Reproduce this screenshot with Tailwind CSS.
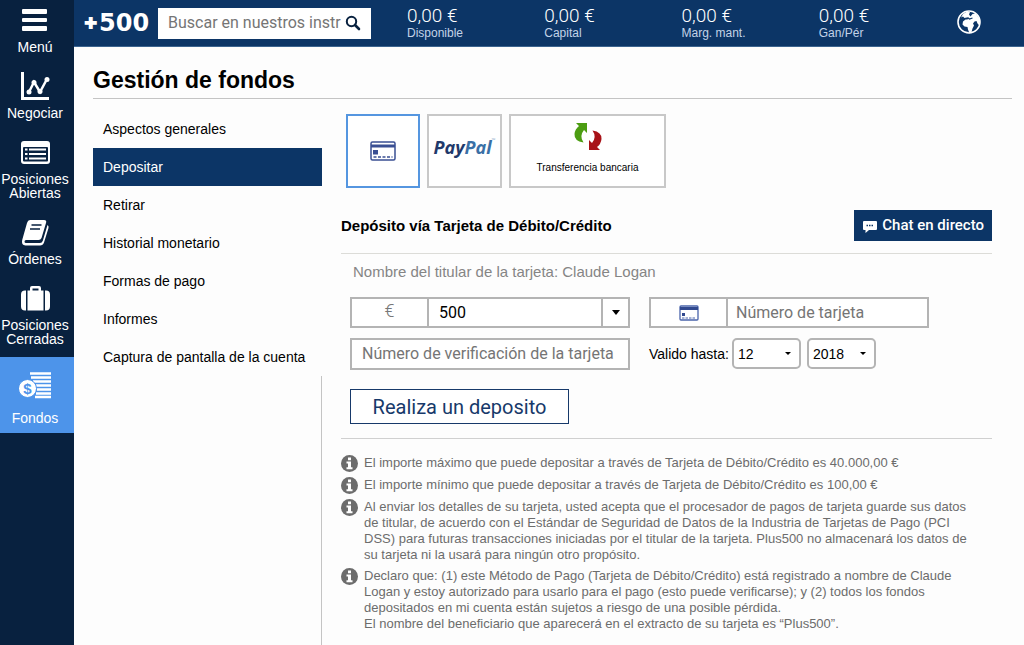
<!DOCTYPE html>
<html lang="es">
<head>
    <meta charset="UTF-8">
    <meta name="viewport" content="width=device-width, initial-scale=1.0">
    <title>Gestión de fondos</title>
    <script src="https://cdn.jsdelivr.net/npm/@tailwindcss/browser@4"></script>
</head>
<body class="flex min-h-screen bg-[#fdfdfd] font-['Liberation_Sans',Arial,sans-serif] text-black">

    <!-- Barra lateral -->
    <nav class="w-[74px] shrink-0 bg-[#08213f] pt-1 text-center text-sm leading-[14px] text-white">
        <div class="flex flex-col gap-4 pr-1">
            <a href="#" class="flex flex-col items-center gap-1">
                <svg class="h-8 w-8" viewBox="0 0 32 32" fill="#fff">
                    <rect x="3" y="5" width="25" height="5" rx="1"/>
                    <rect x="3" y="14" width="25" height="4" rx="1"/>
                    <rect x="3" y="22" width="25" height="5" rx="1"/>
                </svg>
                Menú
            </a>
            <a href="#" class="flex flex-col items-center gap-1">
                <svg class="h-8 w-8" viewBox="0 0 32 32" fill="none" stroke="#fff">
                    <path d="M3.500 2v27M2 28.500h28" stroke-width="3"/>
                    <path d="M10 22l5-10 6 10 7-13" stroke-width="2.500"/>
                    <g fill="#fff" stroke="none">
                        <circle cx="10" cy="22" r="2.500"/><circle cx="15" cy="12.500" r="2.500"/>
                        <circle cx="21" cy="21.500" r="2.500"/><circle cx="28" cy="9.500" r="2.500"/>
                    </g>
                </svg>
                Negociar
            </a>
            <a href="#" class="flex flex-col items-center gap-1">
                <svg class="h-8 w-8" viewBox="0 0 32 32">
                    <rect x="2" y="5" width="29" height="23" rx="3" fill="#fff"/>
                    <rect x="4" y="11" width="25" height="14.500" rx="1" fill="#08213f"/>
                    <path d="M6 13.500h2.500M6 18h2.500M6 22.500h2.500M10 13.500h17M10 18h17M10 22.500h17" stroke="#fff" stroke-width="2.200"/>
                </svg>
                Posiciones Abiertas
            </a>
            <a href="#" class="flex flex-col items-center gap-1">
                <svg class="h-8 w-8" viewBox="0 0 32 32">
                    <path d="M11 4h14q3 0 2 3l-4.500 15q-.8 2-3 2H7q-1.500 0-1.500 1.500T7 27h14q2 0 2.800-2.300L28.500 9q1.500 1 1 3L25 26.500q-1 3-4 3H6.500Q2 29 3.200 24L8 7q.8-3 3-3z" fill="#fff"/>
                    <path d="M12.500 9h10M11 13h10" stroke="#08213f" stroke-width="1.700"/>
                </svg>
                Órdenes
            </a>
            <a href="#" class="flex flex-col items-center gap-1">
                <svg class="h-8 w-8" viewBox="0 0 32 32" fill="#fff">
                    <path d="M7 8.500v20H6q-4 0-4-4v-12q0-4 4-4zM26 8.500v20h1q4 0 4-4v-12q0-4-4-4z"/>
                    <path d="M8.500 8.500h2.500V6q0-2 2-2h7q2 0 2 2v2.500h2.500v20h-16zM13.500 6.500v2h6v-2z" fill-rule="evenodd"/>
                </svg>
                Posiciones Cerradas
            </a>
        </div>
        <a href="#" class="mt-[11px] flex flex-col items-center gap-2.5 bg-[#4d94ea] pt-3 pr-1 pb-2">
            <svg class="h-8 w-8" viewBox="0 0 32 32">
                <path d="M11 4.500h21M12 8.500h20M14 12.500h18M17 16.500h15M18 20.500h14M17 24.500h15M16 28h16" stroke="#fff" stroke-width="2.600"/>
                <circle cx="8.500" cy="19.500" r="9" fill="#fff" stroke="#4d94ea"/>
                <text x="8.500" y="25" text-anchor="middle" font-family="Liberation Sans" font-size="15" font-weight="700" fill="#4d94ea">$</text>
            </svg>
            Fondos
        </a>
    </nav>

    <div class="flex min-w-0 flex-1 flex-col">
        <!-- Cabecera -->
        <header class="flex h-[47px] items-center border-b border-[#3c648f] bg-[#0c3566] pr-[42px] pl-2.5 text-white">
            <a href="#" class="flex w-[74px] items-center font-['DejaVu_Sans',sans-serif] text-2xl leading-6 font-bold"><span class="w-[15px] text-base leading-6 [-webkit-text-stroke:2px_white]">+</span>500</a>
            <label class="flex h-[31px] w-[213px] items-center bg-white pr-2.5 pl-2.5">
                <input type="text" placeholder="Buscar en nuestros instrumentos" aria-label="Buscar" class="min-w-0 flex-1 font-[Roboto,sans-serif] text-base text-black outline-none placeholder:text-[#757575]">
                <svg class="ml-1 h-4 w-4 shrink-0" viewBox="0 0 16 16" fill="none" stroke="#08213f">
                    <circle cx="6.500" cy="6.500" r="4.700" stroke-width="2"/>
                    <path d="M10 10l4 4" stroke-width="2.600" stroke-linecap="round"/>
                </svg>
            </label>
            <dl class="ml-9 grid flex-1 grid-cols-4">
                <div class="flex flex-col-reverse">
                    <dt class="text-xs leading-[14px] text-[#c3d3e8]">Disponible</dt>
                    <dd class="font-[Roboto,sans-serif] text-[19px] leading-5 font-light">0,00 €</dd>
                </div>
                <div class="flex flex-col-reverse">
                    <dt class="text-xs leading-[14px] text-[#c3d3e8]">Capital</dt>
                    <dd class="font-[Roboto,sans-serif] text-[19px] leading-5 font-light">0,00 €</dd>
                </div>
                <div class="flex flex-col-reverse">
                    <dt class="text-xs leading-[14px] text-[#c3d3e8]">Marg. mant.</dt>
                    <dd class="font-[Roboto,sans-serif] text-[19px] leading-5 font-light">0,00 €</dd>
                </div>
                <div class="flex flex-col-reverse">
                    <dt class="text-xs leading-[14px] text-[#c3d3e8]">Gan/Pér</dt>
                    <dd class="font-[Roboto,sans-serif] text-[19px] leading-5 font-light">0,00 €</dd>
                </div>
            </dl>
            <button type="button" aria-label="Idioma">
                <svg class="h-[26px] w-[26px]" viewBox="0 0 26 26">
                    <circle cx="13" cy="12" r="11" fill="none" stroke="#fff" stroke-width="1.600"/>
                    <path d="M7 4l4-2.500 3 .5-1 2.500 1.500 2 2-2.500 3-.5q4 4 4.500 8l-1 3.500-1.500-1.500-1-2.500-2 .5-1.500 2 1 2-1.500 3-1 3.500-2 1.500-1.500-4-.5-2.500-3-.5-2-2 .5-3 2.500-2h2l1-1.500-2-.5-2 .5-1.500-1.500-2 1z" fill="#fff"/>
                    <path d="M11.500 7.500l2 1.500 3-1" fill="none" stroke="#0c3566" stroke-width="1.200"/>
                </svg>
            </button>
        </header>

        <main class="flex flex-1 flex-col pl-[19px]">
            <h1 class="mr-3 border-b border-[#c4c4c4] pt-[19px] pb-1 text-[23px] leading-7 font-bold">Gestión de fondos</h1>

            <div class="flex flex-1">
                <!-- Submenú -->
                <aside class="flex w-[229px] shrink-0 flex-col pt-[11px] text-sm">
                    <a href="#" class="px-2.5 leading-[38px]">Aspectos generales</a>
                    <a href="#" class="bg-[#0c3566] px-2.5 leading-[38px] text-white">Depositar</a>
                    <a href="#" class="px-2.5 leading-[38px]">Retirar</a>
                    <a href="#" class="px-2.5 leading-[38px]">Historial monetario</a>
                    <a href="#" class="px-2.5 leading-[38px]">Formas de pago</a>
                    <a href="#" class="px-2.5 leading-[38px]">Informes</a>
                    <a href="#" class="px-2.5 leading-[38px]">Captura de pantalla de la cuenta</a>
                    <div class="flex-1 border-r border-[#c4c4c4]"></div>
                </aside>

                <section class="min-w-0 flex-1 pt-[15px] pr-8 pb-2 pl-[19px]">
                    <!-- Métodos de pago -->
                    <div class="flex gap-[7px] pl-[5px]">
                        <button type="button" aria-label="Tarjeta" class="flex h-[74px] w-[74px] items-center justify-center border-2 border-[#5596e0] bg-white">
                            <svg class="h-5 w-[26px]" viewBox="0 0 26 20">
                                <rect x="1" y="1" width="24" height="18" rx="1.500" fill="#fff" stroke="#3a4f93" stroke-width="1.500"/>
                                <path d="M1 5h24" stroke="#3a4f93" stroke-width="3"/>
                                <rect x="3" y="9" width="5" height="4.500" fill="#3a4f93"/>
                                <path d="M3.500 16h19" stroke="#3a4f93" stroke-width="1.500" stroke-dasharray="3 1.500"/>
                            </svg>
                        </button>
                        <button type="button" class="flex h-[74px] w-[75px] items-center justify-center border-2 border-[#c8c8c8] bg-white pb-2 font-['Open_Sans',sans-serif] text-lg font-bold text-[#21396b] italic"><span>Pay<span class="text-[#3a70a6]">Pal</span></span><span class="pb-3 text-[5px] text-[#8fadc9] not-italic">™</span></button>
                        <button type="button" class="flex h-[74px] w-[157px] flex-col items-center border-2 border-[#c8c8c8] bg-white pt-1.5 text-[10px]">
                            <svg class="mb-2 h-[30px] w-[30px]" viewBox="0 0 30 30">
                                <path d="M3 1h11v10l-3-3q-5 6-.5 12.500Q1 19 1.500 12 2 7 6 4z" fill="#4c9d12"/>
                                <path d="M3 1h11v10l-3-3q-5 6-.5 12.500Q1 19 1.500 12 2 7 6 4z" fill="#a81218" transform="rotate(180 15 14.500)"/>
                            </svg>
                            Transferencia bancaria
                        </button>
                    </div>

                    <div class="mt-[22px] flex items-center justify-between border-b border-[#dcdcd8] pb-3">
                        <h2 class="text-[15px] leading-5 font-bold">Depósito vía Tarjeta de Débito/Crédito</h2>
                        <button type="button" class="flex h-[31px] items-center gap-1 bg-[#0c3566] px-2 font-[Roboto,sans-serif] text-[15px] font-medium text-white">
                            <svg class="h-4 w-4" viewBox="0 0 16 16">
                                <path d="M2 3h12q1 0 1 1v7q0 1-1 1H7l-3.500 3v-3H2q-1 0-1-1V4q0-1 1-1z" fill="#fff"/>
                                <path d="M4.500 7.500h7" stroke="#0c3566" stroke-width="1.300" stroke-dasharray="1.500 1"/>
                            </svg>
                            Chat en directo
                        </button>
                    </div>

                    <p class="mt-[9px] pl-3 text-[15px] leading-[18px] text-[#858585]">Nombre del titular de la tarjeta: Claude Logan</p>

                    <form class="mt-4 pl-[9px]">
                        <div class="grid grid-cols-[280px_280px] gap-x-[19px] gap-y-2.5 font-[Roboto,sans-serif] text-base">
                            <div class="flex h-[31px] border-2 border-[#b4b4b4] bg-white">
                                <span class="w-[75px] text-center text-lg leading-6 font-light text-[#777777]">€</span>
                                <input type="text" value="500" aria-label="Importe" class="min-w-0 flex-1 border-x-2 border-[#b4b4b4] px-2.5 outline-none">
                                <button type="button" aria-label="Ver importes" class="flex w-[25px] items-center justify-center">
                                    <svg class="h-[5px] w-2" viewBox="0 0 8 5"><path d="M0 0h8L4 5z"/></svg>
                                </button>
                            </div>
                            <div class="flex h-[31px] border-2 border-[#b4b4b4] bg-white">
                                <span class="flex w-[75px] items-center justify-center">
                                    <svg class="h-4 w-5" viewBox="0 0 20 16">
                                        <rect x="1" y="1" width="18" height="14" rx="1" fill="#fff" stroke="#4a64ab" stroke-width="1.300"/>
                                        <path d="M1 3.500h18" stroke="#31498f" stroke-width="3"/>
                                        <rect x="3" y="8" width="3" height="3" fill="#31498f"/>
                                        <path d="M3 13h14" stroke="#4a64ab" stroke-dasharray="2.500 1"/>
                                    </svg>
                                </span>
                                <input type="text" placeholder="Número de tarjeta" aria-label="Número de tarjeta" class="min-w-0 flex-1 border-l-2 border-[#b4b4b4] px-2 outline-none placeholder:text-[#757575]">
                            </div>
                            <input type="text" placeholder="Número de verificación de la tarjeta" aria-label="Número de verificación de la tarjeta" class="h-8 border-2 border-[#b4b4b4] bg-white px-2.5 pb-0.5 outline-none placeholder:text-[#757575]">
                            <div class="flex items-center pb-1 font-['Liberation_Sans',Arial,sans-serif] text-sm">
                                <label for="mes" class="w-[83px] shrink-0">Valido hasta:</label>
                                <div class="relative mr-1.5">
                                    <select id="mes" class="h-[31px] w-[69px] appearance-none rounded-[5px] border-2 border-[#b4b4b4] bg-white px-1 outline-none">
                                        <option>12</option>
                                    </select>
                                    <svg class="pointer-events-none absolute top-3.5 right-2.5 h-[3px] w-1.5" viewBox="0 0 6 3"><path d="M0 0h6L3 3z"/></svg>
                                </div>
                                <div class="relative">
                                    <select aria-label="Año" class="h-[31px] w-[69px] appearance-none rounded-[5px] border-2 border-[#b4b4b4] bg-white px-1 outline-none">
                                        <option>2018</option>
                                    </select>
                                    <svg class="pointer-events-none absolute top-3.5 right-2.5 h-[3px] w-1.5" viewBox="0 0 6 3"><path d="M0 0h6L3 3z"/></svg>
                                </div>
                            </div>
                        </div>
                        <button type="submit" class="mt-4 h-[35px] w-[219px] border border-[#17396a] bg-white font-[Roboto,sans-serif] text-xl text-[#17396a]">Realiza un deposito</button>
                    </form>

                    <!-- Avisos -->
                    <ul class="mt-3.5 flex flex-col gap-[5px] border-t border-[#d0d0d0] pt-4 text-[13px] leading-4 text-[#6c6c6c]">
                        <li class="flex gap-1.5">
                            <svg class="h-[17px] w-[17px] shrink-0" viewBox="0 0 17 17"><circle cx="8.500" cy="8.500" r="8.500" fill="#6c6c6c"/><path d="M7 2.500h3v2.700H7zM5.500 6.500H10v5.700h1.500v2h-6v-2H7V8.500H5.500z" fill="#fff"/></svg>
                            <p>El importe máximo que puede depositar a través de Tarjeta de Débito/Crédito es 40.000,00 €</p>
                        </li>
                        <li class="flex gap-1.5">
                            <svg class="h-[17px] w-[17px] shrink-0" viewBox="0 0 17 17"><circle cx="8.500" cy="8.500" r="8.500" fill="#6c6c6c"/><path d="M7 2.500h3v2.700H7zM5.500 6.500H10v5.700h1.500v2h-6v-2H7V8.500H5.500z" fill="#fff"/></svg>
                            <p>El importe mínimo que puede depositar a través de Tarjeta de Débito/Crédito es 100,00 €</p>
                        </li>
                        <li class="flex gap-1.5">
                            <svg class="h-[17px] w-[17px] shrink-0" viewBox="0 0 17 17"><circle cx="8.500" cy="8.500" r="8.500" fill="#6c6c6c"/><path d="M7 2.500h3v2.700H7zM5.500 6.500H10v5.700h1.500v2h-6v-2H7V8.500H5.500z" fill="#fff"/></svg>
                            <p>Al enviar los detalles de su tarjeta, usted acepta que el procesador de pagos de tarjeta guarde sus datos<br>de titular, de acuerdo con el Estándar de Seguridad de Datos de la Industria de Tarjetas de Pago (PCI<br>DSS) para futuras transacciones iniciadas por el titular de la tarjeta. Plus500 no almacenará los datos de<br>su tarjeta ni la usará para ningún otro propósito.</p>
                        </li>
                        <li class="flex gap-1.5">
                            <svg class="h-[17px] w-[17px] shrink-0" viewBox="0 0 17 17"><circle cx="8.500" cy="8.500" r="8.500" fill="#6c6c6c"/><path d="M7 2.500h3v2.700H7zM5.500 6.500H10v5.700h1.500v2h-6v-2H7V8.500H5.500z" fill="#fff"/></svg>
                            <p>Declaro que: (1) este Método de Pago (Tarjeta de Débito/Crédito) está registrado a nombre de Claude<br>Logan y estoy autorizado para usarlo para el pago (esto puede verificarse); y (2) todos los fondos<br>depositados en mi cuenta están sujetos a riesgo de una posible pérdida.<br>El nombre del beneficiario que aparecerá en el extracto de su tarjeta es “Plus500”.</p>
                        </li>
                    </ul>
                </section>
            </div>
        </main>
    </div>
</body>
</html>
